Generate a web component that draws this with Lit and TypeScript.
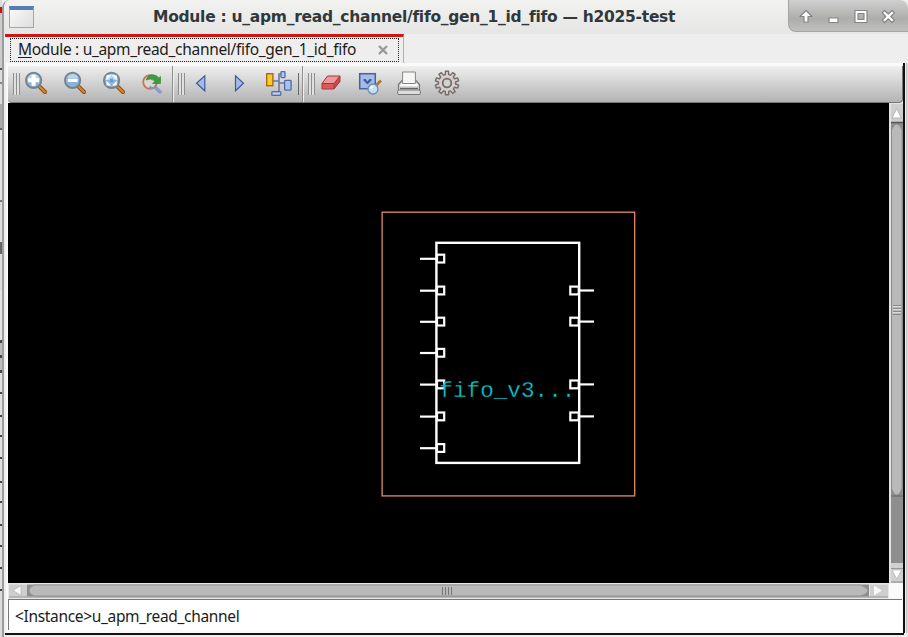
import { LitElement, html, svg, css } from "lit";
import { customElement } from "lit/decorators.js";

const lens = (inner: unknown) => html`<svg class="icon" viewBox="0 0 24 24" width="24" height="24">
  <path d="M16 16 L21 21" stroke="#8a4a14" stroke-width="4" stroke-linecap="round"/>
  <path d="M16 16 L21 21" stroke="#d9852a" stroke-width="2.200" stroke-linecap="round"/>
  <circle cx="9.600" cy="9.300" r="7.700" fill="#8db3d6" stroke="#72828e" stroke-width="1.800"/>
  <path d="M3.600 9 A6 6 0 0 1 15.600 9 Z" fill="#bdd6ea"/>${inner}</svg>`;

const icons = {
  zoomIn: lens(svg`<path d="M9.600 3.800v11M4.100 9.300h11" stroke="#fff" stroke-width="4"/>`),
  zoomOut: lens(svg`<rect x="4.200" y="7.200" width="10.800" height="4.200" fill="#fff" stroke="#5f8fc0" stroke-width=".5"/>`),
  zoomFit: lens(svg`<path d="M4.500 9V4.200h4.700zM14.700 9V4.200h-4.700zM4.500 9.800v4.700h4.700zM14.700 9.800v4.700h-4.700z" fill="#fff"/><rect x="8" y="7.700" width="3.200" height="3.200" fill="#6b9acb"/>`),
  redraw: html`<svg class="icon" viewBox="0 0 24 24" width="24" height="24">
    <path d="M15 16l5 5" stroke="#8f9cc8" stroke-width="3.800" stroke-linecap="round"/>
    <circle cx="10" cy="11" r="6.800" fill="#d6d9d6" stroke="#c8735c" stroke-width="1.800"/>
    <path d="M9.500 15.500q3 3 6 .5" stroke="#8c94a8" stroke-width="2" fill="none"/>
    <path d="M6 9Q8 3 14 4q3.500 .5 4.500 3l2-1.500v7h-8l2.600-2.500Q11 6.500 6 9z" fill="#3f9c3e" stroke="#2e7f35" stroke-width=".6"/></svg>`,
  prev: html`<svg class="icon" viewBox="0 0 24 24" width="24" height="24"><path d="M15.800 4.800v15L7.500 12.300z" fill="#a4bbe6" stroke="#3b59a0" stroke-width="1.200"/></svg>`,
  next: html`<svg class="icon" viewBox="0 0 24 24" width="24" height="24"><path d="M7.500 4.800v15l8-7.500z" fill="#a4bbe6" stroke="#3b59a0" stroke-width="1.200"/></svg>`,
  tree: html`<svg class="icon" viewBox="0 0 28 28" width="28" height="28">
    <path d="M9 12h6M15 12V5h4M15 10v12M15 14h8" fill="none" stroke="#6a7a9c" stroke-width="1.600"/>
    <rect x="2.700" y="4.700" width="6.200" height="12" fill="#ffc927" stroke="#a86a18" stroke-width="1.400"/>
    <rect x="17" y="2.600" width="4" height="6" rx=".8" fill="#b7cbef" stroke="#4f6ca8" stroke-width="1.300"/>
    <rect x="20.600" y="11.400" width="6.500" height="9.700" rx=".8" fill="#a9c0ec" stroke="#4f6ca8" stroke-width="1.300"/>
    <rect x="7.800" y="22.600" width="9" height="3.800" rx="1" fill="#b7cbef" stroke="#4f6ca8" stroke-width="1.300"/></svg>`,
  eraser: html`<svg class="icon" viewBox="0 0 24 24" width="24" height="24">
    <path d="M8.500 5H21L15 12.500H3z" fill="#ea9a9a"/><path d="M3 12.500H15V18H3z" fill="#d95a5e"/><path d="M15 12.500L21 5v5.500L15 18z" fill="#c84a50"/>
    <path d="M8.500 5H21v5.500L15 18H3v-5.500zM3 12.500h12V18M15 12.500L21 5" fill="none" stroke="#ac3238" stroke-linejoin="round"/></svg>`,
  inspect: html`<svg class="icon" viewBox="0 0 26 26" width="26" height="26">
    <rect x="2.700" y="3.700" width="15.600" height="15" fill="#a6bce6" stroke="#4463a0" stroke-width="1.500"/>
    <path d="M6.500 9h2l2 2.500 2-2.500h2v1.500l-4 4-4-4z" fill="#3d5d9e"/>
    <path d="M19 15.500l5-5" stroke="#b37432" stroke-width="2.600"/>
    <circle cx="16" cy="19" r="5" fill="#c7def2" stroke="#6a8cb4" stroke-width="1.300"/><path d="M13 17.500q1-2.500 4-2l-3 4z" fill="#fff"/></svg>`,
  print: html`<svg class="icon" viewBox="0 0 28 28" width="28" height="28">
    <path d="M3.500 15.500l4-4.500h13l4 4.500v7h-21z" fill="#d9dad8" stroke="#777" stroke-width="1.200"/>
    <path d="M7.600 14.500V3h12.800v11.500z" fill="#f6f6f5" stroke="#888"/>
    <path d="M5.500 16h17" stroke="#fff" stroke-width="2"/><path d="M5 19.500h18" stroke="#666" stroke-width="1.400"/>
    <rect x="2.600" y="21" width="22.800" height="4.500" rx="1.500" fill="#ddd" stroke="#777"/></svg>`,
  gear: html`<svg class="icon" viewBox="-13 -13 26 26" width="26" height="26">
    <g fill="#d6cfcd" stroke="#746b6b" stroke-width="1.400" stroke-linejoin="round"><path d=${gearPath()}/><circle r="4.300" fill="#d2d2d2" stroke-width="1.800"/></g></svg>`,
};

function gearPath(): string {
  const teeth = 10;
  const pts: string[] = [];
  for (let i = 0; i < teeth; i++) {
    const a = (i / teeth) * Math.PI * 2 - Math.PI / 2;
    for (const [o, r] of [[-0.2, 8.6], [-0.13, 11.8], [0.13, 11.8], [0.2, 8.6]]) {
      pts.push(`${(Math.cos(a + o) * r).toFixed(2)} ${(Math.sin(a + o) * r).toFixed(2)}`);
    }
  }
  return `M${pts.join("L")}Z`;
}

@customElement("schematic-view")
class SchematicView extends LitElement {
  static styles = css`
    :host { display: block; background: #000; overflow: hidden; }
    svg { display: block; }
    .bounds { fill: none; stroke: #e88a64; stroke-width: 1.300; }
    .body { fill: none; stroke: #fff; stroke-width: 2.400; }
    .pin { fill: #000; stroke: #fff; stroke-width: 2.200; }
    .wire { stroke: #fff; stroke-width: 2.200; }
    .name { fill: #00ccd2; stroke: #000; stroke-width: 0.300px; font: 22.700px "Liberation Mono", monospace; white-space: pre; }
  `;
  private left = [258.6, 290.5, 321.6, 352.8, 384.4, 416.4, 448];
  private right = [290.5, 321.6, 384.4, 416.4];
  render() {
    return html`<svg viewBox="8 103 881 480" width="881" height="480">
      <rect class="bounds" x="382.100" y="212.200" width="252.600" height="283.700"/>
      <rect class="body" x="436.400" y="242.800" width="142.800" height="220.100"/>
      ${this.left.map((y) => svg`<path class="wire" d="M420 ${y + 0.2}h16"/><rect class="pin" x="437" y=${y - 3.9} width="7.200" height="7.800"/>`)}
      <text class="name" x="439.300" y="397">fifo_v3...</text>
      ${this.right.map((y) => svg`<path class="wire" d="M580 ${y}h14"/><rect class="pin" x="570.300" y=${y - 3.9} width="8.400" height="7.800"/>`)}
    </svg>`;
  }
}

@customElement("app-root")
class AppRoot extends LitElement {
  static styles = css`
    :host { display: grid; grid-template-columns: 2px 906px; width: 908px; height: 637px; overflow: hidden; background: #eee; color: #1c1c1c; font-family: "Noto Sans", "Open Sans", sans-serif; }
    svg { display: block; }
    .behind { display: flex; flex-direction: column; background: #dcdcdc; }
    .behind i { flex: none; width: 2px; }
    .window { display: flex; flex-direction: column; box-sizing: border-box; height: 637px; border-left: 2px solid #9c9c9c; border-radius: 8px 8px 0 0; background: #eee; overflow: hidden; }
    .title { display: flex; height: 34px; flex: none; background: linear-gradient(#f2f2f1, #e5e6e4); }
    .app { width: 25px; height: 22px; margin: 6px 0 0 5px; box-sizing: border-box; border: 1px solid #a3a7aa; border-top: 4px solid #547db5; background: linear-gradient(135deg, #f8f8f8, #dedede); }
    .caption { flex: 1; padding-left: 119px; line-height: 34px; font-size: 15.500px; letter-spacing: -0.270px; font-weight: 700; color: #30383b; white-space: pre; font-family: "DejaVu Sans", sans-serif; }
    .buttons { width: 120px; height: 32px; box-sizing: border-box; border: 1px solid #a4a4a4; border-top: 0; border-right: 0; border-radius: 0 7px 0 8px; background: linear-gradient(#d0d0d0, #adadab 60%, #bfbfbf); }
    .tabs { display: flex; height: 29px; flex: none; padding-left: 1px; }
    .tab { display: flex; box-sizing: border-box; width: 399px; border-top: 3px solid #cc1717; border-right: 1px solid #b0b0b0; padding: 1px 4px 1px 5px; }
    .focus { display: flex; flex: 1; box-sizing: border-box; border: 1px dotted #222; align-items: center; padding: 0 10px 2px 7px; font-size: 15.500px; letter-spacing: -0.320px; white-space: pre; justify-content: space-between; }
    .focus u { text-underline-offset: 2px; }
    .focus svg { margin-top: 2px; }
    .main { display: flex; flex: none; height: 570px; }
    .content { width: 895px; margin-left: 2px; padding-left: 2px; flex: none; background: #fafafa; }
    .edge { width: 2px; height: 570px; background: #111; }
    .outer { flex: 1; background: linear-gradient(90deg, #eee 30%, #a8a8a8 40%, #ddd 60%); }
    .toolbar { display: flex; margin-top: 3px; height: 37px; box-sizing: border-box; border-bottom: 1px solid #777; border-right: 1px solid #777; border-radius: 0 0 4px 4px; background: linear-gradient(#efefef, #dadada 35%, #b3b3b3); align-items: center; }
    .group { display: flex; align-items: center; height: 36px; box-sizing: border-box; padding-left: 5px; border-right: 1px solid #8f8f8f; box-shadow: 1px 0 #eee; }
    .group.last { border: 0; box-shadow: none; }
    .grip { width: 7px; height: 22px; margin-right: -3px; background: repeating-linear-gradient(90deg, #8e8e8e 0 1px, #e0e0e0 1px 3px); flex: none; }
    .slot { width: 38.700px; display: flex; justify-content: center; flex: none; padding-bottom: 2px; }
    .rule { width: 1px; height: 22px; background: #666; margin-right: 3px; }
    .view { display: grid; grid-template-columns: 881px 14px; grid-template-rows: 480px 16px; }
    .status { display: flex; align-items: center; box-sizing: border-box; width: 894px; height: 31px; border: 1px solid #777; border-width: 1px 0 0 1px; background: #fff; padding: 2px 0 0 6px; font-size: 15.500px; letter-spacing: -0.330px; white-space: pre; }
    .bottom { height: 2px; flex: none; margin-left: 1px; width: 899px; background: #111; }
  `;
  private marks: [number, string][] = [[7, "#dcdcdc"], [6, "#c11"], [55, "#ccc"], [2, "#555"], [12, "#ddd"], [2, "#888"], [20, "#ddd"], [24, "#aaa"], [2, "#666"], [70, "#e5e5e5"], [2, "#777"], [40, "#ddd"], [12, "#666"], [36, "#ddd"], [50, "#e5e5e5"], [3, "#444"], [12, "#bbb"], [3, "#444"], [12, "#bbb"], [3, "#444"],
    ...[19, 21, 18, 20, 22, 18, 21, 19, 20, 20].flatMap((h) => [[h, "#e0e0e0"], [2, "#444"]] as [number, string][])];
  render() {
    const slot = (i: unknown) => html`<div class="slot">${i}</div>`;
    return html`
      <div class="behind">${this.marks.map(([h, c]) => html`<i style="height:${h}px;background:${c}"></i>`)}</div>
      <div class="window">
        <div class="title">
          <div class="app"></div>
          <div class="caption">Module : u_apm_read_channel/fifo_gen_1_id_fifo — h2025-test</div>
          <div class="buttons"><svg viewBox="789.500 0 118 31" width="118" height="31">
            <g fill="#fff" stroke="#858585" stroke-width="1.200" stroke-linejoin="round">
              <path d="M806.500 10.500l6 6h-4v5.500h-4v-5.500h-4z"/>
              <rect x="829.500" y="18" width="9" height="4.500"/>
              <path fill-rule="evenodd" d="M855.500 10.500h12v12h-12zM858.500 13.500v6h6v-6z"/>
              <path d="M885 10.500l3.800 3.500 3.800-3.500 2.300 2.300-3.600 3.700 3.600 3.700-2.300 2.300-3.800-3.500-3.800 3.500-2.300-2.300 3.600-3.700-3.600-3.700z"/>
            </g></svg></div>
        </div>
        <div class="tabs"><div class="tab"><div class="focus"><span><u>M</u>odule : u_apm_read_channel/fifo_gen_1_id_fifo</span>
          <svg viewBox="0 0 10 10" width="10" height="10"><path d="M1 1l8 8M9 1L1 9" stroke="#999" stroke-width="2.400"/></svg></div></div></div>
        <div class="main">
          <div class="content">
            <div class="toolbar">
              <div class="group"><div class="grip"></div>${slot(icons.zoomIn)}${slot(icons.zoomOut)}${slot(icons.zoomFit)}${slot(icons.redraw)}</div>
              <div class="group"><div class="grip"></div>${slot(icons.prev)}${slot(icons.next)}${slot(icons.tree)}<div class="rule"></div></div>
              <div class="group last"><div class="grip"></div>${slot(icons.eraser)}${slot(icons.inspect)}${slot(icons.print)}${slot(icons.gear)}</div>
            </div>
            <div class="view">
              <schematic-view></schematic-view>
              <svg viewBox="889 103 14 480" width="14" height="480">
                <rect x="889" y="103" width="15" height="480" fill="#e2e2e2"/>
                <rect x="891" y="122" width="12" height="442" fill="#8e8e8e"/>
                <rect x="891" y="104" width="12" height="18" fill="#cecece"/>
                <path d="M892 118l4.700-9.500 4.700 9.500z" fill="#fff" stroke="#aaa" stroke-width=".8"/>
                <path d="M891 122.500h12" stroke="#555" stroke-width="1.500"/>
                <path d="M891.500 130q2-6 5.200-6t5.300 6v358q-2 7-5.300 7t-5.200-7z" fill="#b9b9b9" stroke="#858585" stroke-width=".8"/>
                <path d="M891 496h12" stroke="#666"/>
                <path d="M893 305.500h8M893 308.500h8M893 311.500h8M893 314.500h8" stroke="#888"/>
                <path d="M893 306.500h8M893 309.500h8M893 312.500h8" stroke="#ddd"/>
                <rect x="891" y="563" width="12" height="18" fill="#d0d0d0"/>
                <path d="M891 568.500h12" stroke="#999"/><path d="M892 570h9.500l-4.700 9z" fill="#fff" stroke="#aaa" stroke-width=".6"/>
                <path d="M891 582h12" stroke="#777"/>
              </svg>
              <svg viewBox="8 583 881 16" width="881" height="16">
                <rect x="8" y="583" width="881" height="16" fill="#e8e8e8"/>
                <rect x="27" y="584.500" width="842" height="12" fill="#8e8e8e"/>
                <rect x="9" y="584.500" width="18" height="12" fill="#cecece"/>
                <path d="M21 585.500v10l-8-5z" fill="#f8f8f8" stroke="#aaa" stroke-width=".6"/>
                <path d="M34 585h826q7 2 8 5.500-1 4-8 5.500H34q-5-2-5-5.500t5-5.500z" fill="#b9b9b9" stroke="#888" stroke-width=".7"/>
                <path d="M442.500 587v8M445.500 587v8M448.500 587v8M451.500 587v8" stroke="#777"/>
                <rect x="870" y="584.500" width="18" height="12" fill="#cecece"/>
                <path d="M874 585.500v10l8-5z" fill="#f8f8f8"/>
                <path d="M9 597h879" stroke="#888"/>
              </svg>
            </div>
            <div class="status">&lt;Instance&gt;u_apm_read_channel</div>
          </div>
          <div class="edge"></div><div class="outer"></div>
        </div>
        <div class="bottom"></div>
      </div>`;
  }
}
